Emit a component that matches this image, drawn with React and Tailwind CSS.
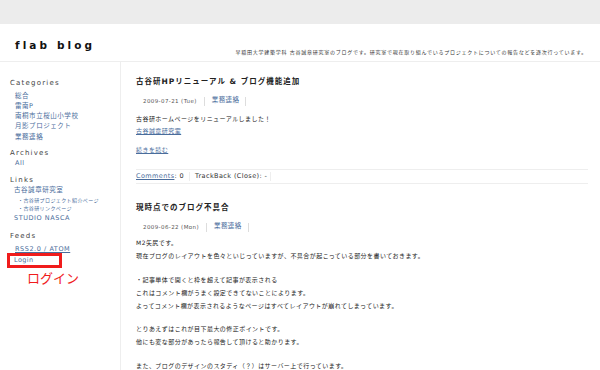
import React from 'react';

const jp = { fontFamily: '"DejaVu Sans", "Noto Sans CJK JP", sans-serif' };

const categories = ['総合', '雷南P', '南桐市立桜山小学校', '月影プロジェクト', '業務連絡'];

function SideHeading({ children, className = '' }) {
  return (
    <div className={`text-[7px] leading-[10px] tracking-[1.2px] text-[#444] ${className}`}>{children}</div>
  );
}

function SideLink({ children, className = '' }) {
  return (
    <div className={`text-[6.5px] leading-[10.3px] tracking-[0.55px] text-[#4a6d9c] ${className}`}>{children}</div>
  );
}

function DateRow({ date }) {
  return (
    <div className="flex items-center h-[12px] pl-[7px] text-[5.5px] tracking-[0.4px] text-[#555]">
      <span>{date}</span>
      <span className="mx-[7px] h-[9px] border-l border-[#ddd]" />
      <span className="text-[6.5px] text-[#4a6d9c]">業務連絡</span>
      <span className="ml-[6px] h-[9px] border-l border-[#ddd]" />
    </div>
  );
}

export default function App() {
  return (
    <div className="w-[600px] h-[370px] overflow-hidden bg-white" style={jp}>
      {/* top band */}
      <div className="h-[24px] bg-[#ececec]" />

      {/* header */}
      <div className="h-[38px] border-b border-[#eee] flex items-start justify-between pl-[15px] pr-[13px]">
        <div className="mt-[14px] text-[10.5px] font-semibold tracking-[3.1px] text-[#111]">flab blog</div>
        <div className="mt-[25px] text-[5px] tracking-[0.75px] text-[#333]">
          早稲田大学建築学科 古谷誠章研究室のブログです。研究室で現在取り組んでいるプロジェクトについての報告などを逐次行っています。
        </div>
      </div>

      <div className="flex">
        {/* sidebar */}
        <div className="w-[121px] shrink-0 border-r border-[#eee] h-[310px] pl-[10px] pt-[15.5px]">
          <SideHeading>Categories</SideHeading>
          <div className="pl-[5px] mt-[3px]">
            {categories.map((c) => (
              <SideLink key={c}>{c}</SideLink>
            ))}
          </div>
          <SideHeading className="mt-[6.5px]">Archives</SideHeading>
          <SideLink className="pl-[5px]">All</SideLink>
          <SideHeading className="mt-[6.5px]">Links</SideHeading>
          <div className="pl-[4px]">
            <SideLink>古谷誠章研究室</SideLink>
            <div className="pl-[4px] text-[5px] leading-[8.7px] tracking-[0.4px] text-[#4a6d9c]">・古谷研プロジェクト紹介ページ</div>
            <div className="pl-[4px] text-[5px] leading-[8.7px] tracking-[0.4px] text-[#4a6d9c]">・古谷研リンクページ</div>
            <SideLink>STUDIO NASCA</SideLink>
          </div>
          <SideHeading className="mt-[7.5px]">Feeds</SideHeading>
          <SideLink className="pl-[5px] mt-[3px] underline">RSS2.0 / ATOM</SideLink>
          <div className="-ml-[3px] -mt-[1px] w-[55px] h-[15px] border-[3px] border-[#f01c1c] pl-[4px] flex items-center">
            <span className="text-[6.5px] tracking-[0.4px] text-[#4a6d9c]">Login</span>
          </div>
          <div className="pl-[17px] mt-[1px] text-[13px] leading-[18px] text-[#f01c1c]" style={{ fontFamily: '"Noto Sans CJK JP", sans-serif' }}>
            ログイン
          </div>
        </div>

        {/* main */}
        <div className="flex-1 pl-[15px] pr-[12px] pt-[15px] text-[#222]">
          <div className="text-[7.5px] font-bold leading-[10px] tracking-[1px]">古谷研HPリニューアル &amp; ブログ機能追加</div>
          <div className="mt-[8px]">
            <DateRow date="2009-07-21 (Tue)" />
          </div>
          <div className="mt-[6px] text-[6px] leading-[12px] tracking-[0.45px]">
            <div>古谷研ホームページをリニューアルしました！</div>
            <div className="text-[#4a6d9c] underline">古谷誠章研究室</div>
            <div className="mt-[7px] text-[#4a6d9c] underline">続きを読む</div>
          </div>
          <div className="mt-[13px] border-t border-[#eee] border-b flex items-center h-[15px] text-[6.5px] tracking-[0.4px] text-[#333]">
            <span className="pr-[5px] border-r border-[#eee]">
              <span className="text-[#4a6d9c] underline">Comments</span>: 0
            </span>
            <span className="pl-[5px] pr-[3px] border-r border-[#eee]">TrackBack (Close): -</span>
          </div>

          <div className="mt-[19px] text-[7.5px] font-bold leading-[10px] tracking-[1px]">現時点でのブログ不具合</div>
          <div className="mt-[8px]">
            <DateRow date="2009-06-22 (Mon)" />
          </div>
          <div className="mt-[3px] text-[6px] leading-[13px] tracking-[0.45px]">
            <p>
              M2矢尻です。
              <br />
              現在ブログのレイアウトを色々といじっていますが、不具合が起こっている部分を書いておきます。
            </p>
            <p className="mt-[10.5px]">
              ・記事単体で開くと枠を超えて記事が表示される
              <br />
              これはコメント欄がうまく設定できてないことによります。
              <br />
              よってコメント欄が表示されるようなページはすべてレイアウトが崩れてしまっています。
            </p>
            <p className="mt-[10.5px]">
              とりあえずはこれが目下最大の修正ポイントです。
              <br />
              他にも変な部分があったら報告して頂けると助かります。
            </p>
            <p className="mt-[10.5px]">また、ブログのデザインのスタディ（？）はサーバー上で行っています。</p>
          </div>
        </div>
      </div>
    </div>
  );
}
